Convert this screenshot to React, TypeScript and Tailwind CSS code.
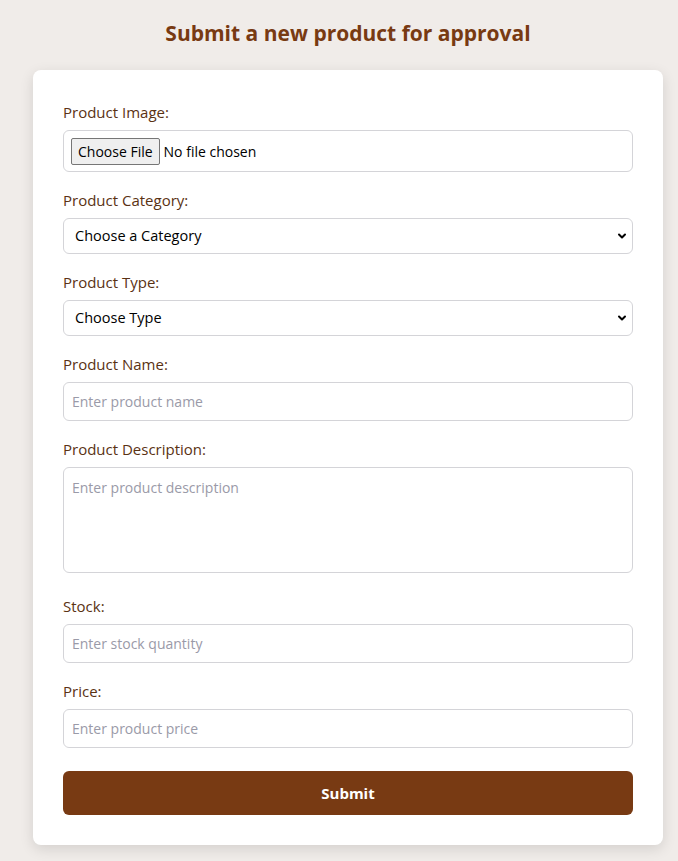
import React from 'react';
import { ChevronDown } from 'lucide-react';

const labelCls = 'block text-[15px] leading-[20px] font-medium text-[#5a3213] mb-[8px]';
const fieldCls =
  'w-full rounded-[6px] border border-[#d4d4d8] bg-white px-[8px] text-[14px] text-black placeholder:text-[#9a9aa8] focus:outline-none';

const Field: React.FC<{ label: string; children: React.ReactNode; className?: string }> = ({
  label,
  children,
  className,
}) => (
  <div className={className ?? 'mb-[18px]'}>
    <label className={labelCls}>{label}</label>
    {children}
  </div>
);

const SelectBox: React.FC<{ placeholder: string }> = ({ placeholder }) => (
  <div className="relative">
    <select
      defaultValue=""
      className="h-[36px] w-full appearance-none rounded-[6px] border border-[#d4d4d8] bg-white pl-[11px] pr-[30px] text-[14.5px] text-black focus:outline-none"
    >
      <option value="">{placeholder}</option>
    </select>
    <ChevronDown
      className="pointer-events-none absolute right-[5px] top-1/2 h-[12px] w-[12px] -translate-y-1/2 text-black"
      strokeWidth={4}
    />
  </div>
);

export default function App() {
  return (
    <div className="min-h-[861px] bg-[#f0ece9] pt-[19px] font-['Open_Sans',sans-serif]">
      <div className="ml-[33px] w-[630px]">
        <h2 className="mb-[23px] text-center text-[21px] leading-[28px] font-bold text-[#783a12]">
          Submit a new product for approval
        </h2>

        <form className="rounded-[8px] bg-white px-[30px] pt-[32px] pb-[30px] shadow-[0_4px_14px_rgba(0,0,0,0.12)]">
          <Field label="Product Image:">
            <div className="flex h-[42px] items-center rounded-[6px] border border-[#d4d4d8] bg-white px-[7px]">
              <input
                type="file"
                className="text-[14px] text-black file:mr-[4px] file:h-[27px] file:rounded-[2px] file:border file:border-[#767676] file:bg-[#efefef] file:px-[6px] file:text-[14px] file:text-black"
              />
            </div>
          </Field>

          <Field label="Product Category:">
            <SelectBox placeholder="Choose a Category" />
          </Field>

          <Field label="Product Type:">
            <SelectBox placeholder="Choose Type" />
          </Field>

          <Field label="Product Name:">
            <input type="text" placeholder="Enter product name" className={`${fieldCls} h-[39px]`} />
          </Field>

          <Field label="Product Description:" className="mb-[23px]">
            <textarea
              placeholder="Enter product description"
              className={`${fieldCls} block h-[106px] resize-none py-[9px]`}
            />
          </Field>

          <Field label="Stock:">
            <input type="number" placeholder="Enter stock quantity" className={`${fieldCls} h-[39px]`} />
          </Field>

          <Field label="Price:" className="mb-[23px]">
            <input type="number" placeholder="Enter product price" className={`${fieldCls} h-[39px]`} />
          </Field>

          <button
            type="submit"
            className="h-[44px] w-full rounded-[6px] bg-[#783a13] text-[15px] font-bold text-white"
          >
            Submit
          </button>
        </form>
      </div>
    </div>
  );
}
